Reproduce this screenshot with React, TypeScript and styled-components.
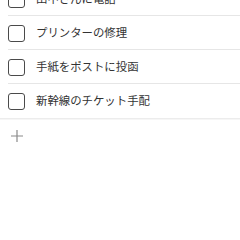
import React from "react";
import styled, { createGlobalStyle } from "styled-components";

const Global = createGlobalStyle`
  html, body { margin: 0; padding: 0; background: #ffffff; }
  body { font-family: "Noto Sans CJK JP", "Noto Sans", sans-serif; overflow: hidden; }
`;

const Page = styled.div`
  width: 240px;
  height: 240px;
  overflow: hidden;
  background: #ffffff;
`;

const List = styled.ul`
  list-style: none;
  margin: -18px 0 0 0;
  padding: 0;
  border-bottom: 1px solid #ececec;
  box-shadow: 0 1px 0 #f6f6f6;
`;

const Row = styled.li<{ $last?: boolean }>`
  height: 34px;
  box-sizing: border-box;
  display: flex;
  align-items: center;
  padding-left: 8px;
  gap: 11px;
  position: relative;
  &::after {
    content: "";
    display: ${(p) => (p.$last ? "none" : "block")};
    position: absolute;
    left: 8px;
    right: 0;
    bottom: 0;
    height: 1px;
    background: #e6e6e6;
  }
`;

const Box = styled.span`
  width: 17px;
  height: 17px;
  box-sizing: border-box;
  border: 1.5px solid #4a4a4a;
  border-radius: 3px;
  flex: none;
  margin-top: 1px;
`;

const Label = styled.span`
  font-size: 11.4px;
  color: #333333;
  line-height: 1;
  white-space: nowrap;
`;

const AddRow = styled.div`
  height: 34px;
  display: flex;
  align-items: center;
  padding-left: 11px;
`;

const items = ["田中さんに電話", "プリンターの修理", "手紙をポストに投函", "新幹線のチケット手配"];

export default function App() {
  return (
    <Page>
      <Global />
      <List>
        {items.map((t, i) => (
          <Row key={t} $last={i === items.length - 1}>
            <Box />
            <Label>{t}</Label>
          </Row>
        ))}
      </List>
      <AddRow>
        <svg width="12" height="12" viewBox="0 0 12 12">
          <path d="M6 0v12M0 6h12" stroke="#8a8a8a" strokeWidth="1.2" fill="none" />
        </svg>
      </AddRow>
    </Page>
  );
}
